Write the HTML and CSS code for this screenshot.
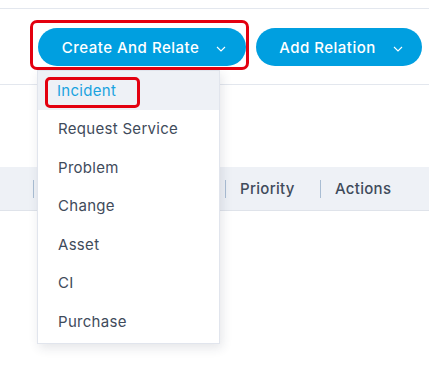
FILE: index.html
```html
<!DOCTYPE html>
<html lang="en">
<head>
  <meta charset="UTF-8" />
  <title>Create And Relate</title>
  <link rel="stylesheet" href="styles.css">
</head>
<body>
  <div class="page">
    <div class="toolbar">
      <div class="mark">
        <button class="pill-btn">Create And Relate
          <svg class="chev" viewBox="0 0 10 6" width="10" height="6"><path d="M1 1l4 4 4-4" fill="none" stroke="#fff" stroke-width="1.1"/></svg>
        </button>
      </div>
      <button class="pill-btn second">Add Relation
        <svg class="chev" viewBox="0 0 10 6" width="10" height="6"><path d="M1 1l4 4 4-4" fill="none" stroke="#fff" stroke-width="1.1"/></svg>
      </button>
    </div>

    <div class="table-head">
      <span class="col first"></span>
      <span class="col prio">Priority</span>
      <span class="col">Actions</span>
    </div>

    <!-- menu opened from Create And Relate -->
    <ul class="menu">
      <li class="active"><span class="mark-item">Incident</span></li>
      <li>Request Service</li>
      <li>Problem</li>
      <li>Change</li>
      <li>Asset</li>
      <li>CI</li>
      <li>Purchase</li>
    </ul>
  </div>
</body>
</html>
```

FILE: styles.css
```css
:root {
  --primary: #009fe0;
  --line: #e3e7ee;
  --head-bg: #eef1f6;
  --text: #3f4b5b;
  --mark: #e3000f;
  --font: 'Inter', 'Open Sans', sans-serif;
}

body {
  margin: 0;
  background: #fff;
  font-family: var(--font);
  color: var(--text);
}

.page {
  position: relative;
  height: 376px;
  overflow: hidden;
}

.toolbar {
  margin-top: 8px;
  border-top: 1px solid var(--line);
  border-bottom: 1px solid var(--line);
  height: 77px;
  display: flex;
  align-items: flex-start;
  padding: 11px 0 0 30px;
  box-sizing: border-box;
}

.mark {
  border: 3px solid var(--mark);
  border-radius: 7px;
  padding: 5px 0 1px 5px;
}

.pill-btn {
  height: 38px;
  border: none;
  border-radius: 19px;
  background: var(--primary);
  color: #fff;
  font-family: var(--font);
  font-size: 15px;
  font-weight: 500;
  letter-spacing: 0.5px;
  display: flex;
  align-items: center;
  gap: 17px;
  padding: 0 0 0 4px;
  width: 208px;
  justify-content: center;
  cursor: pointer;
}

.pill-btn.second {
  margin-top: 8px;
  margin-left: 7px;
  width: 166px;
}

.chev {
  margin-top: 3px;
}

.table-head {
  margin-top: 82px;
  height: 43px;
  background: var(--head-bg);
  border-bottom: 1px solid #dfe3ea;
  display: flex;
  align-items: center;
  padding-left: 33px;
  font-size: 15px;
  font-weight: 500;
  letter-spacing: 0.3px;
}

.col {
  flex-shrink: 0;
  border-left: 1px solid #a9bdd3;
  height: 18px;
  line-height: 18px;
  padding-left: 14px;
}

.col.first { width: 177px; }
.col.prio { width: 80px; }

.menu {
  position: absolute;
  left: 37px;
  top: 70px;
  width: 181px;
  margin: 0;
  padding: 0 0 2px;
  list-style: none;
  background: #fff;
  border: 1px solid #e1e5ed;
  box-shadow: 2px 4px 10px rgba(40, 50, 70, 0.12);
  font-size: 15px;
  letter-spacing: 0.3px;
}

.menu li {
  height: 38.5px;
  display: flex;
  align-items: center;
  padding-left: 20px;
}

.menu li.active {
  background: var(--head-bg);
  color: #1aa3df;
}

.mark-item {
  border: 3px solid var(--mark);
  border-radius: 5px;
  padding: 1px 21px 5px 9px;
  margin-left: -13px;
  margin-top: 5px;
}
```
